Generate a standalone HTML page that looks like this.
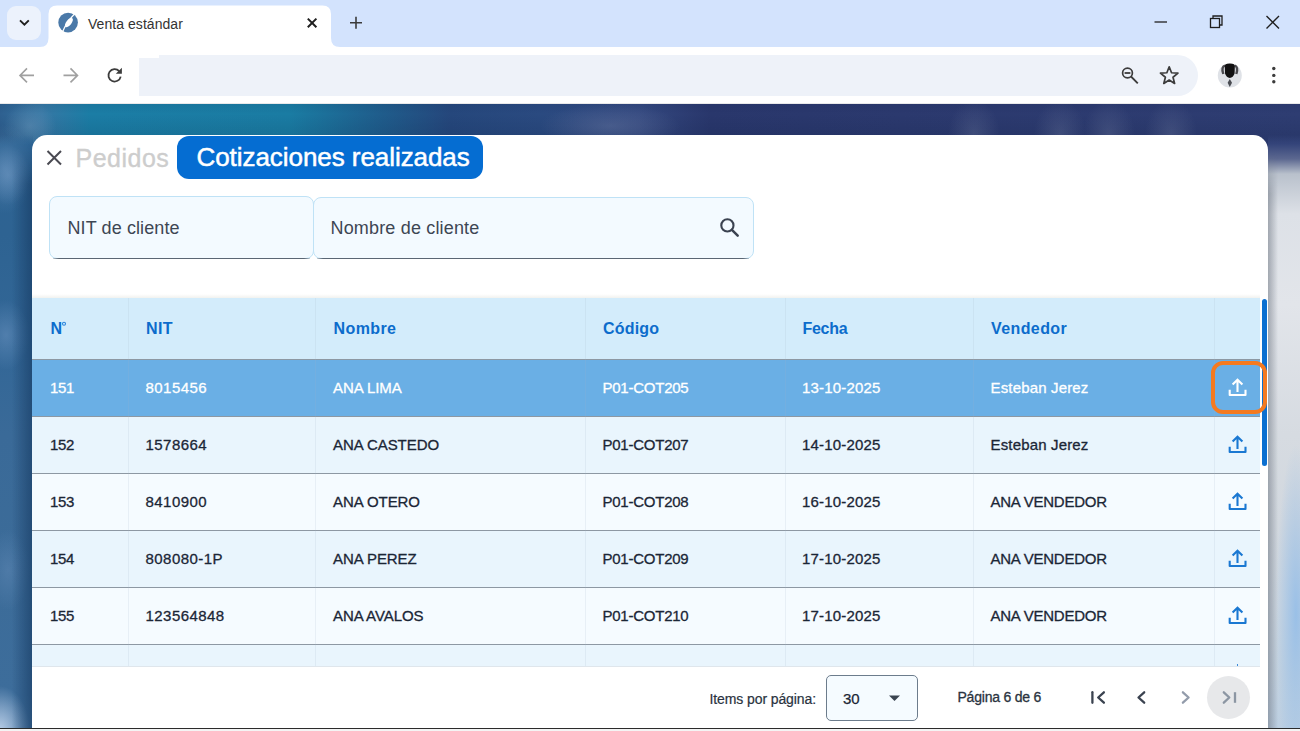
<!DOCTYPE html>
<html><head><meta charset="utf-8">
<style>
*{box-sizing:border-box;margin:0;padding:0}
html,body{width:1300px;height:731px;overflow:hidden;background:#fff;font-family:"Liberation Sans",sans-serif}
.a{position:absolute}
#strip{left:0;top:0;width:1300px;height:47px;background:#d3e3fd}
#page{left:0;top:104px;width:1300px;height:627px;overflow:hidden;
 background:radial-gradient(ellipse 26px 24px at 30px 22px,rgba(140,175,205,.3),rgba(140,175,205,0)),
 radial-gradient(ellipse 70px 22px at 610px 22px,rgba(110,125,165,.4),rgba(110,125,165,0)),
 radial-gradient(ellipse 26px 34px at 974px 30px,rgba(120,132,165,.28),rgba(120,132,165,0)),
 radial-gradient(ellipse 26px 34px at 1060px 30px,rgba(120,132,165,.28),rgba(120,132,165,0)),
 radial-gradient(ellipse 26px 34px at 1109px 30px,rgba(120,132,165,.28),rgba(120,132,165,0)),
 radial-gradient(ellipse 26px 34px at 1171px 30px,rgba(120,132,165,.28),rgba(120,132,165,0)),
 linear-gradient(180deg,rgba(0,10,40,.06) 0,rgba(0,10,40,0) 10px,rgba(0,15,45,.1) 31px),
 linear-gradient(90deg,#2e6090 0,#3677a4 42px,#1b7da5 90px,#1a7ca3 290px,#1f5d8c 380px,#25477c 450px,#2a4a80 540px,#33487f 640px,#29376c 710px,#2b396e 900px,#2e3d72 1300px)}
#lstrip{left:0;top:31px;width:33px;height:596px;background:radial-gradient(ellipse 22px 30px at 8px 40px,rgba(110,150,195,.55),rgba(110,150,195,0)),radial-gradient(ellipse 24px 35px at 6px 200px,rgba(110,150,195,.5),rgba(110,150,195,0)),radial-gradient(ellipse 22px 40px at 8px 435px,rgba(100,140,185,.45),rgba(100,140,185,0)),radial-gradient(ellipse 30px 45px at 0px 596px,rgba(190,210,235,.95),rgba(190,210,235,0)),linear-gradient(180deg,rgba(47,100,148,0) 0,#2d6393 10px,#2e6392 100px,#336797 220px,#3a6a98 300px,#3c6c99 450px,#3d6d9b 560px,#4a78a4 596px)}
#lblob{left:-25px;top:20px;width:60px;height:90px;background:radial-gradient(ellipse at center,rgba(120,160,200,.35),rgba(120,160,200,0) 70%)}
#lshade{left:12px;top:40px;width:21px;height:587px;background:linear-gradient(90deg,rgba(20,50,90,0),rgba(22,58,98,.65));-webkit-mask-image:linear-gradient(180deg,transparent 0,#000 40px)}
#rstrip{left:1268px;top:31px;width:32px;height:596px;background:linear-gradient(90deg,rgba(255,255,255,0) 0,rgba(255,255,255,0) 12px,rgba(160,195,230,0) 14px),linear-gradient(180deg,rgba(52,68,122,0) 0,#34447a 9px,#5c6890 24px,#b9c1cc 39px,#dde1e7 79px,#e2e5ea 169px,#d6dbe1 299px,#d2d8df 389px,#ccd6e0 470px,#c3d2e0 540px,#bccfe2 596px)}
#rblue{left:1272px;top:330px;width:50px;height:300px;background:radial-gradient(ellipse 20px 170px at 24px 180px,rgba(145,188,232,.85),rgba(145,188,232,0))}
#rshade{left:1268px;top:50px;width:10px;height:577px;background:linear-gradient(90deg,rgba(110,118,130,.55),rgba(140,148,158,0));-webkit-mask-image:linear-gradient(180deg,transparent 0,#000 40px)}
#modal{left:32px;top:135px;width:1236px;height:600px;background:#fff;border-radius:15px 15px 0 0}
.txt{white-space:nowrap;line-height:1}
</style></head><body>
<div class="a" id="strip"></div>
<!-- tab dropdown -->
<div class="a" style="left:7px;top:5.8px;width:34px;height:33.8px;border-radius:9px;background:#ecf2fc"></div>
<svg class="a" style="left:0;top:0" width="1300" height="47">
 <path d="M20 20.3 L24.4 24.7 L28.8 20.3" fill="none" stroke="#1f1f1f" stroke-width="1.9"/>
 <!-- active tab -->
 <path d="M40 47 Q48.5 47 48.5 38 L48.5 14 Q48.5 5.5 57 5.5 L322.5 5.5 Q331 5.5 331 14 L331 38 Q331 47 340 47 Z" fill="#fff"/>
 <!-- favicon -->
 <ellipse cx="68.1" cy="22.6" rx="9.8" ry="9.9" fill="#4a79a8"/>
 <ellipse cx="68.9" cy="22.6" rx="2.6" ry="5.6" transform="rotate(38 68.9 22.6)" fill="#fff"/>
 <path d="M63 31 Q66 23 74 14.5" fill="none" stroke="#fff" stroke-width="1.1"/>
 <!-- close tab -->
 <path d="M307.8 18.6 L316.4 27.2 M316.4 18.6 L307.8 27.2" stroke="#1f1f1f" stroke-width="2"/>
 <!-- new tab -->
 <path d="M350 22.7 L362 22.7 M356 16.7 L356 28.7" stroke="#3b3b3b" stroke-width="1.6"/>
 <!-- window controls -->
 <path d="M1154.5 22 L1167 22" stroke="#1f1f1f" stroke-width="1.3"/>
 <rect x="1210.5" y="18.5" width="9" height="9" fill="none" stroke="#1f1f1f" stroke-width="1.3"/>
 <path d="M1213 18.5 L1213 16 L1222 16 L1222 25 L1219.5 25" fill="none" stroke="#1f1f1f" stroke-width="1.3"/>
 <path d="M1266.5 16 L1279 28.5 M1279 16 L1266.5 28.5" stroke="#1f1f1f" stroke-width="1.4"/>
</svg>
<div class="a txt" style="left:88px;top:17.2px;font-size:14px;color:#333;letter-spacing:.05px">Venta estándar</div>
<!-- toolbar -->
<div class="a" style="left:0;top:47px;width:1300px;height:57px;background:#fff;border-radius:8px 8px 0 0"></div>
<div class="a" style="left:159px;top:54.5px;width:1039px;height:41.5px;border-radius:0 20.7px 20.7px 0;background:#eef2f9"></div><div class="a" style="left:139px;top:57.7px;width:21px;height:38.3px;background:#eef2f9"></div>
<svg class="a" style="left:0;top:47px" width="1300" height="57">
 <g fill="none" stroke-width="1.6" stroke-linecap="butt">
 <path d="M20 28.4 L34 28.4 M27 21.4 L20 28.4 L27 35.4" stroke="#a0a0a0"/>
 <path d="M63.5 28.4 L77.5 28.4 M70.5 21.4 L77.5 28.4 L70.5 35.4" stroke="#a0a0a0"/>
 <path d="M120.7 29.6 A6.2 6.2 0 1 1 119.2 24.1" stroke="#3c3c3c" stroke-width="1.8"/>
 <path d="M115.8 26.8 L121.9 26.8 L121.9 20.7 Z" fill="#3c3c3c" stroke="none"/>
 <circle cx="1127.5" cy="26" r="4.9" stroke="#3c3c3c" stroke-width="1.7"/>
 <path d="M1131 29.5 L1137.8 36.3" stroke="#3c3c3c" stroke-width="1.8"/>
 <path d="M1124.6 26 L1130.4 26" stroke="#3c3c3c" stroke-width="1.8"/>
 <path d="M1169.20 19.80 L1171.55 25.76 L1177.95 26.16 L1173.00 30.24 L1174.61 36.44 L1169.20 33.00 L1163.79 36.44 L1165.40 30.24 L1160.45 26.16 L1166.85 25.76 Z" stroke="#3c3c3c" stroke-width="1.7" stroke-linejoin="round"/>
 </g>
 <circle cx="1229.8" cy="28.6" r="12" fill="#dfe2e7"/>
 <path d="M1223.3 27 Q1221 20 1225 18.5 M1236.3 27 Q1238.6 20 1234.6 18.5" fill="none" stroke="#4a4a4e" stroke-width="2.4"/>
 <path d="M1229.8 16.6 Q1224 16.6 1224.8 20 L1225 26.5 Q1226.5 30.5 1229.8 31 Q1233.1 30.5 1234.6 26.5 L1234.8 20 Q1235.6 16.6 1229.8 16.6 Z" fill="#111"/>
 <path d="M1229.8 32 L1232 35.8 L1229.8 40 L1227.6 35.8 Z" fill="#4a4c52"/>
 <circle cx="1273.8" cy="21.5" r="1.7" fill="#3c3c3c"/>
 <circle cx="1273.8" cy="28.4" r="1.7" fill="#3c3c3c"/>
 <circle cx="1273.8" cy="34.8" r="1.7" fill="#3c3c3c"/>
</svg>
<div class="a" style="left:0;top:102.6px;width:1300px;height:1.4px;background:#e9e9ea"></div>
<!-- page -->
<div class="a" id="page">
 <div class="a" id="lstrip"></div>
 <div class="a" id="lblob"></div>
 <div class="a" id="lshade"></div>
 <div class="a" id="rstrip"></div>
 <div class="a" id="rblue"></div>
 <div class="a" id="rshade"></div>
</div>
<div class="a" id="modal"></div>
<!-- modal content -->
<svg class="a" style="left:0;top:0" width="1300" height="731">
 <path d="M47.5 151 L61 164.5 M61 151 L47.5 164.5" stroke="#4a4a52" stroke-width="2"/>
</svg>
<div class="a txt" style="left:75.5px;top:145.5px;font-size:25px;color:#cdcdcd;letter-spacing:.5px;-webkit-text-stroke:.35px #cdcdcd">Pedidos</div>
<div class="a" style="left:177px;top:136.4px;width:305.5px;height:42.2px;border-radius:12px;background:#056dd2"></div>
<div class="a txt" style="left:196.5px;top:144.3px;font-size:26px;color:#fff;letter-spacing:-.06px;-webkit-text-stroke:.5px #fff">Cotizaciones realizadas</div>
<div class="a" style="left:49px;top:196px;width:265px;height:63px;border:1px solid #bfe2f6;border-radius:8px;background:#f3faff"></div>
<div class="a" style="left:312.5px;top:196.5px;width:441px;height:62.5px;border:1px solid #bfe2f6;border-radius:8px;background:#f3faff"></div>
<div class="a" style="left:53px;top:258.3px;width:257px;height:1.2px;background:linear-gradient(90deg,rgba(90,102,116,.3),#5a6674 6px,#5a6674 251px,rgba(90,102,116,.3))"></div>
<div class="a" style="left:317px;top:258.3px;width:432px;height:1.2px;background:linear-gradient(90deg,rgba(90,102,116,.3),#5a6674 6px,#5a6674 426px,rgba(90,102,116,.3))"></div>
<div class="a txt" style="left:67.5px;top:218.5px;font-size:18px;color:#3d4653;letter-spacing:.1px">NIT de cliente</div>
<div class="a txt" style="left:330.5px;top:218.5px;font-size:18px;color:#3d4653;letter-spacing:.17px">Nombre de cliente</div>
<svg class="a" style="left:715px;top:215px" width="30" height="30"><circle cx="12.4" cy="10.4" r="6.1" fill="none" stroke="#3a4250" stroke-width="2.1"/><path d="M16.9 14.9 L22.7 20.7" stroke="#3a4250" stroke-width="2.5" stroke-linecap="round"/></svg>
<div class="a" style="left:32px;top:293.5px;width:1228px;height:4.5px;background:linear-gradient(180deg,rgba(235,235,230,0),#f1f2ef)"></div>
<div class="a" style="left:32px;top:297.6px;width:1228px;height:61.4px;background:#d3ecfb"></div>
<div class="a txt" style="left:50.5px;top:320.8px;font-size:16px;font-weight:700;color:#0c6ccc;letter-spacing:0.4px">N</div>
<div class="a txt" style="left:146.0px;top:320.8px;font-size:16px;font-weight:700;color:#0c6ccc;letter-spacing:0.4px">NIT</div>
<div class="a txt" style="left:333.5px;top:320.8px;font-size:16px;font-weight:700;color:#0c6ccc;letter-spacing:0.4px">Nombre</div>
<div class="a txt" style="left:603.0px;top:320.8px;font-size:16px;font-weight:700;color:#0c6ccc;letter-spacing:0.2px">Código</div>
<div class="a txt" style="left:802.5px;top:320.8px;font-size:16px;font-weight:700;color:#0c6ccc;letter-spacing:-0.3px">Fecha</div>
<div class="a txt" style="left:991.0px;top:320.8px;font-size:16px;font-weight:700;color:#0c6ccc;letter-spacing:0.4px">Vendedor</div>
<svg class="a" style="left:60px;top:320px" width="8" height="8"><circle cx="4" cy="3.7" r="1.5" fill="none" stroke="#2a84dc" stroke-width="1.1"/></svg>
<div class="a" style="left:32px;top:359px;width:1228px;height:57px;background:#6aafe5"></div>
<div class="a" style="left:32px;top:359px;width:1228px;height:1px;background:#8d98a3"></div>
<div class="a" style="left:32px;top:416px;width:1228px;height:57px;background:#e9f5fd"></div>
<div class="a" style="left:32px;top:416px;width:1228px;height:1px;background:#8d98a3"></div>
<div class="a" style="left:32px;top:473px;width:1228px;height:57px;background:#f5fbff"></div>
<div class="a" style="left:32px;top:473px;width:1228px;height:1px;background:#8d98a3"></div>
<div class="a" style="left:32px;top:530px;width:1228px;height:57px;background:#e9f5fd"></div>
<div class="a" style="left:32px;top:530px;width:1228px;height:1px;background:#8d98a3"></div>
<div class="a" style="left:32px;top:587px;width:1228px;height:57px;background:#f5fbff"></div>
<div class="a" style="left:32px;top:587px;width:1228px;height:1px;background:#8d98a3"></div>
<div class="a" style="left:32px;top:644px;width:1228px;height:22px;background:#e9f5fd"></div>
<div class="a" style="left:32px;top:644px;width:1228px;height:1px;background:#8d98a3"></div>
<div class="a" style="left:32px;top:666px;width:1228px;height:1px;background:#dfe6ec"></div>
<div class="a" style="left:1236.6px;top:664.4px;width:1.8px;height:1.6px;background:#3d8ad8"></div>
<div class="a" style="left:128px;top:298px;width:1px;height:368px;background:rgba(160,180,200,.16)"></div>
<div class="a" style="left:315px;top:298px;width:1px;height:368px;background:rgba(160,180,200,.16)"></div>
<div class="a" style="left:584.5px;top:298px;width:1px;height:368px;background:rgba(160,180,200,.16)"></div>
<div class="a" style="left:784.5px;top:298px;width:1px;height:368px;background:rgba(160,180,200,.16)"></div>
<div class="a" style="left:973px;top:298px;width:1px;height:368px;background:rgba(160,180,200,.16)"></div>
<div class="a" style="left:1213.5px;top:298px;width:1px;height:368px;background:rgba(160,180,200,.16)"></div>
<div class="a txt" style="left:50px;top:379.5px;font-size:15px;color:#fff;letter-spacing:-0.3px;-webkit-text-stroke:.3px #fff">151</div>
<div class="a txt" style="left:145.5px;top:379.5px;font-size:15px;color:#fff;letter-spacing:0.45px;-webkit-text-stroke:.3px #fff">8015456</div>
<div class="a txt" style="left:333px;top:379.5px;font-size:15px;color:#fff;letter-spacing:-0.06px;-webkit-text-stroke:.3px #fff">ANA LIMA</div>
<div class="a txt" style="left:602.5px;top:379.5px;font-size:15px;color:#fff;letter-spacing:-0.24px;-webkit-text-stroke:.3px #fff">P01-COT205</div>
<div class="a txt" style="left:802px;top:379.5px;font-size:15px;color:#fff;letter-spacing:0.18px;-webkit-text-stroke:.3px #fff">13-10-2025</div>
<div class="a txt" style="left:990.5px;top:379.5px;font-size:15px;color:#fff;letter-spacing:0.16px;-webkit-text-stroke:.3px #fff">Esteban Jerez</div>
<svg class="a" style="left:1220px;top:359px" width="40" height="57"><path d="M17.5 33 L17.5 21 M12.6 25.6 L17.5 20.7 L22.4 25.6" fill="none" stroke="#fff" stroke-width="2.1"/><path d="M9.7 30.8 L9.7 36 L25.5 36 L25.5 30.8" fill="none" stroke="#fff" stroke-width="2.1" stroke-linejoin="round"/></svg>
<div class="a txt" style="left:50px;top:436.5px;font-size:15px;color:#1b2636;letter-spacing:-0.3px;-webkit-text-stroke:.3px #1b2636">152</div>
<div class="a txt" style="left:145.5px;top:436.5px;font-size:15px;color:#1b2636;letter-spacing:0.45px;-webkit-text-stroke:.3px #1b2636">1578664</div>
<div class="a txt" style="left:333px;top:436.5px;font-size:15px;color:#1b2636;letter-spacing:-0.06px;-webkit-text-stroke:.3px #1b2636">ANA CASTEDO</div>
<div class="a txt" style="left:602.5px;top:436.5px;font-size:15px;color:#1b2636;letter-spacing:-0.24px;-webkit-text-stroke:.3px #1b2636">P01-COT207</div>
<div class="a txt" style="left:802px;top:436.5px;font-size:15px;color:#1b2636;letter-spacing:0.18px;-webkit-text-stroke:.3px #1b2636">14-10-2025</div>
<div class="a txt" style="left:990.5px;top:436.5px;font-size:15px;color:#1b2636;letter-spacing:0.16px;-webkit-text-stroke:.3px #1b2636">Esteban Jerez</div>
<svg class="a" style="left:1220px;top:416px" width="40" height="57"><path d="M17.5 33 L17.5 21 M12.6 25.6 L17.5 20.7 L22.4 25.6" fill="none" stroke="#1a78d2" stroke-width="2.1"/><path d="M9.7 30.8 L9.7 36 L25.5 36 L25.5 30.8" fill="none" stroke="#1a78d2" stroke-width="2.1" stroke-linejoin="round"/></svg>
<div class="a txt" style="left:50px;top:493.5px;font-size:15px;color:#1b2636;letter-spacing:-0.3px;-webkit-text-stroke:.3px #1b2636">153</div>
<div class="a txt" style="left:145.5px;top:493.5px;font-size:15px;color:#1b2636;letter-spacing:0.45px;-webkit-text-stroke:.3px #1b2636">8410900</div>
<div class="a txt" style="left:333px;top:493.5px;font-size:15px;color:#1b2636;letter-spacing:-0.06px;-webkit-text-stroke:.3px #1b2636">ANA OTERO</div>
<div class="a txt" style="left:602.5px;top:493.5px;font-size:15px;color:#1b2636;letter-spacing:-0.24px;-webkit-text-stroke:.3px #1b2636">P01-COT208</div>
<div class="a txt" style="left:802px;top:493.5px;font-size:15px;color:#1b2636;letter-spacing:0.18px;-webkit-text-stroke:.3px #1b2636">16-10-2025</div>
<div class="a txt" style="left:990.5px;top:493.5px;font-size:15px;color:#1b2636;letter-spacing:-0.24px;-webkit-text-stroke:.3px #1b2636">ANA VENDEDOR</div>
<svg class="a" style="left:1220px;top:473px" width="40" height="57"><path d="M17.5 33 L17.5 21 M12.6 25.6 L17.5 20.7 L22.4 25.6" fill="none" stroke="#1a78d2" stroke-width="2.1"/><path d="M9.7 30.8 L9.7 36 L25.5 36 L25.5 30.8" fill="none" stroke="#1a78d2" stroke-width="2.1" stroke-linejoin="round"/></svg>
<div class="a txt" style="left:50px;top:550.5px;font-size:15px;color:#1b2636;letter-spacing:-0.3px;-webkit-text-stroke:.3px #1b2636">154</div>
<div class="a txt" style="left:145.5px;top:550.5px;font-size:15px;color:#1b2636;letter-spacing:0.45px;-webkit-text-stroke:.3px #1b2636">808080-1P</div>
<div class="a txt" style="left:333px;top:550.5px;font-size:15px;color:#1b2636;letter-spacing:-0.06px;-webkit-text-stroke:.3px #1b2636">ANA PEREZ</div>
<div class="a txt" style="left:602.5px;top:550.5px;font-size:15px;color:#1b2636;letter-spacing:-0.24px;-webkit-text-stroke:.3px #1b2636">P01-COT209</div>
<div class="a txt" style="left:802px;top:550.5px;font-size:15px;color:#1b2636;letter-spacing:0.18px;-webkit-text-stroke:.3px #1b2636">17-10-2025</div>
<div class="a txt" style="left:990.5px;top:550.5px;font-size:15px;color:#1b2636;letter-spacing:-0.24px;-webkit-text-stroke:.3px #1b2636">ANA VENDEDOR</div>
<svg class="a" style="left:1220px;top:530px" width="40" height="57"><path d="M17.5 33 L17.5 21 M12.6 25.6 L17.5 20.7 L22.4 25.6" fill="none" stroke="#1a78d2" stroke-width="2.1"/><path d="M9.7 30.8 L9.7 36 L25.5 36 L25.5 30.8" fill="none" stroke="#1a78d2" stroke-width="2.1" stroke-linejoin="round"/></svg>
<div class="a txt" style="left:50px;top:607.5px;font-size:15px;color:#1b2636;letter-spacing:-0.3px;-webkit-text-stroke:.3px #1b2636">155</div>
<div class="a txt" style="left:145.5px;top:607.5px;font-size:15px;color:#1b2636;letter-spacing:0.45px;-webkit-text-stroke:.3px #1b2636">123564848</div>
<div class="a txt" style="left:333px;top:607.5px;font-size:15px;color:#1b2636;letter-spacing:-0.06px;-webkit-text-stroke:.3px #1b2636">ANA AVALOS</div>
<div class="a txt" style="left:602.5px;top:607.5px;font-size:15px;color:#1b2636;letter-spacing:-0.24px;-webkit-text-stroke:.3px #1b2636">P01-COT210</div>
<div class="a txt" style="left:802px;top:607.5px;font-size:15px;color:#1b2636;letter-spacing:0.18px;-webkit-text-stroke:.3px #1b2636">17-10-2025</div>
<div class="a txt" style="left:990.5px;top:607.5px;font-size:15px;color:#1b2636;letter-spacing:-0.24px;-webkit-text-stroke:.3px #1b2636">ANA VENDEDOR</div>
<svg class="a" style="left:1220px;top:587px" width="40" height="57"><path d="M17.5 33 L17.5 21 M12.6 25.6 L17.5 20.7 L22.4 25.6" fill="none" stroke="#1a78d2" stroke-width="2.1"/><path d="M9.7 30.8 L9.7 36 L25.5 36 L25.5 30.8" fill="none" stroke="#1a78d2" stroke-width="2.1" stroke-linejoin="round"/></svg>
<div class="a" style="left:1262px;top:299px;width:5px;height:167px;border-radius:2.5px;background:#0b6fd0"></div>
<div class="a" style="left:1210.5px;top:360.5px;width:56.5px;height:53px;border:4.5px solid #f47a20;border-radius:12px"></div>
<div class="a txt" style="left:709.5px;top:691.5px;font-size:14px;color:#2a3340;letter-spacing:-.1px;-webkit-text-stroke:.2px #2a3340">Items por página:</div>
<div class="a" style="left:825.5px;top:675px;width:92px;height:45.5px;border:1.3px solid #6c7c8c;border-radius:5px;background:#f5fbff"></div>
<div class="a txt" style="left:843px;top:690.5px;font-size:15px;color:#1b2636;-webkit-text-stroke:.25px #1b2636">30</div>
<svg class="a" style="left:885px;top:690px" width="20" height="16"><path d="M4 5.5 L15 5.5 L9.5 11 Z" fill="#3a4450"/></svg>
<div class="a txt" style="left:957.5px;top:690px;font-size:14px;color:#2a3340;letter-spacing:-.22px;-webkit-text-stroke:.3px #2a3340">Página 6 de 6</div>
<div class="a" style="left:1207.3px;top:675.8px;width:43.2px;height:43.2px;border-radius:50%;background:#e7e8ea"></div>
<svg class="a" style="left:1080px;top:680px" width="180" height="36"><g fill="none" stroke-linecap="round" stroke-linejoin="round" stroke-width="2.3"><path d="M12.4 12.2 L12.4 22.8" stroke="#3b4350"/><path d="M23.9 12.3 L18.2 17.5 L23.9 22.7" stroke="#3b4350"/><path d="M64.2 12.3 L58.5 17.5 L64.2 22.7" stroke="#3b4350"/><path d="M102.9 12.3 L108.6 17.5 L102.9 22.7" stroke="#939cab"/><path d="M143.8 12.3 L149.3 17.5 L143.8 22.7" stroke="#8c96a3"/><path d="M155 12.2 L155 22.8" stroke="#8c96a3" stroke-linecap="butt"/></g></svg>
<div class="a" style="left:0;top:727.5px;width:1300px;height:1.7px;background:#2b2b2b"></div>
<div class="a" style="left:0;top:729px;width:1300px;height:2px;background:#f4f4f4"></div>
</body></html>
